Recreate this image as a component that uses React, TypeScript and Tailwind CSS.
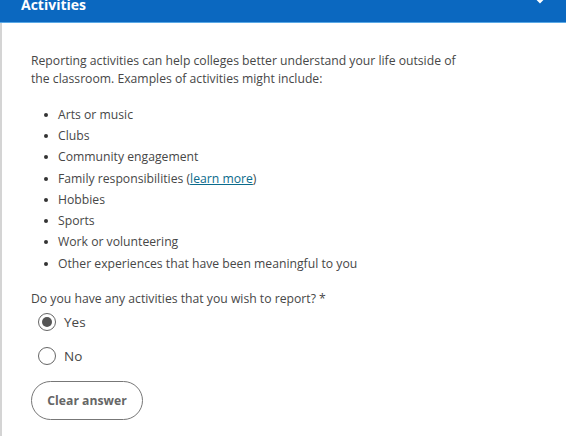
import { useState } from 'react';

const activities = [
  'Arts or music',
  'Clubs',
  'Community engagement',
  'Family responsibilities',
  'Hobbies',
  'Sports',
  'Work or volunteering',
  'Other experiences that have been meaningful to you',
];

export default function App() {
  const [answer, setAnswer] = useState<'yes' | 'no' | null>('yes');

  return (
    <div className="w-[571px] h-[436px] bg-white overflow-hidden font-['Open_Sans',sans-serif]">
      <div className="w-[564px] h-full border-l-2 border-[#d4d4d4] flex flex-col">
        {/* header, scrolled so the title is half cut */}
        <div className="h-[23px] -ml-[2px] w-[566px] bg-[#0b68c0] border-b border-[#5aa9e6] flex items-end justify-between pl-[21px] pr-[18px] overflow-hidden">
          <span className="text-white font-bold text-[14px] leading-none mb-[10px]">Activities</span>
          <svg width="16" height="10" viewBox="0 0 16 10" className="mb-[17px]">
            <path d="M2 1 L8 7 L14 1" stroke="white" strokeWidth="2" fill="none" />
          </svg>
        </div>

        <div className="pl-[29px] pt-[29px] text-[12.2px] leading-[18px] text-[#474747]">
          <p className="w-[440px]">
            Reporting activities can help colleges better understand your life outside of the classroom. Examples of activities might include:
          </p>

          <ul className="mt-[16px] flex flex-col">
            {activities.map((item) => (
              <li key={item} className="flex items-center h-[21.3px]">
                <span className="w-[4px] h-[4px] rounded-full bg-[#333] ml-[13px] mr-[10px]" />
                <span>
                  {item}
                  {item === 'Family responsibilities' && (
                    <>
                      {' '}(<a href="#" className="text-[#0b6b8c] underline">learn more</a>)
                    </>
                  )}
                </span>
              </li>
            ))}
          </ul>

          <p className="mt-[16px]">Do you have any activities that you wish to report? *</p>

          <div className="mt-[5px] flex flex-col gap-[16px] pl-[7px]">
            <button className="flex items-center gap-[8px]" onClick={() => setAnswer('yes')}>
              <span className="w-[18px] h-[18px] rounded-full border border-[#666] flex items-center justify-center">
                {answer === 'yes' && <span className="w-[10px] h-[10px] rounded-full bg-[#555]" />}
              </span>
              <span className="text-[13.5px]">Yes</span>
            </button>
            <button className="flex items-center gap-[8px]" onClick={() => setAnswer('no')}>
              <span className="w-[18px] h-[18px] rounded-full border border-[#666] flex items-center justify-center">
                {answer === 'no' && <span className="w-[10px] h-[10px] rounded-full bg-[#555]" />}
              </span>
              <span className="text-[13.5px]">No</span>
            </button>
          </div>

          <button
            className="mt-[16px] w-[112px] h-[39px] rounded-full border-[1.5px] border-[#777] text-[#666] font-bold text-[12.2px]"
            onClick={() => setAnswer(null)}
          >
            Clear answer
          </button>
        </div>
      </div>
    </div>
  );
}
